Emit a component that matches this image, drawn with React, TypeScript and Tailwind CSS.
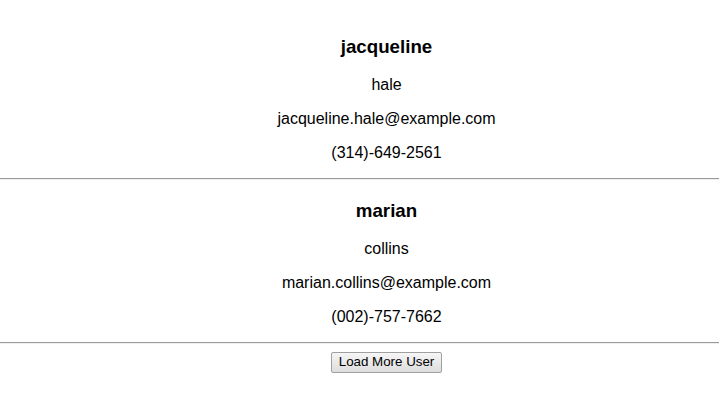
const users = [
  { first: 'jacqueline', last: 'hale', email: 'jacqueline.hale@example.com', phone: '(314)-649-2561' },
  { first: 'marian', last: 'collins', email: 'marian.collins@example.com', phone: '(002)-757-7662' },
]

function UserCard({ first, last, email, phone }: (typeof users)[number]) {
  return (
    <div className="flex flex-col">
      <div className="flex flex-col items-center pl-[54px]">
        <h3 className="mt-[19.6px] text-[18.72px] font-bold leading-[22px]">{first}</h3>
        <p className="mt-[18px] text-base leading-[18px]">{last}</p>
        <p className="mt-4 text-base leading-[18px]">{email}</p>
        <p className="mt-4 text-base leading-[18px]">{phone}</p>
      </div>
      <hr className="mt-4 h-0.5 w-full border-t border-b border-t-[#9a9a9a] border-b-[#eeeeee]" />
    </div>
  )
}

export default function App() {
  return (
    <div className="min-h-screen bg-white pt-[16.4px] text-center text-black" style={{ fontFamily: '"Liberation Sans", Arial, sans-serif' }}>
      {users.map((u) => (
        <UserCard key={u.email} {...u} />
      ))}
      <div className="mt-2 flex justify-center pl-[54px]">
        <button className="h-[21px] rounded-[2px] border border-[#a0a0a0] bg-gradient-to-b from-[#f6f6f6] to-[#dddddd] px-[7px] text-[13.33px] leading-none text-black">
          Load More User
        </button>
      </div>
    </div>
  )
}
